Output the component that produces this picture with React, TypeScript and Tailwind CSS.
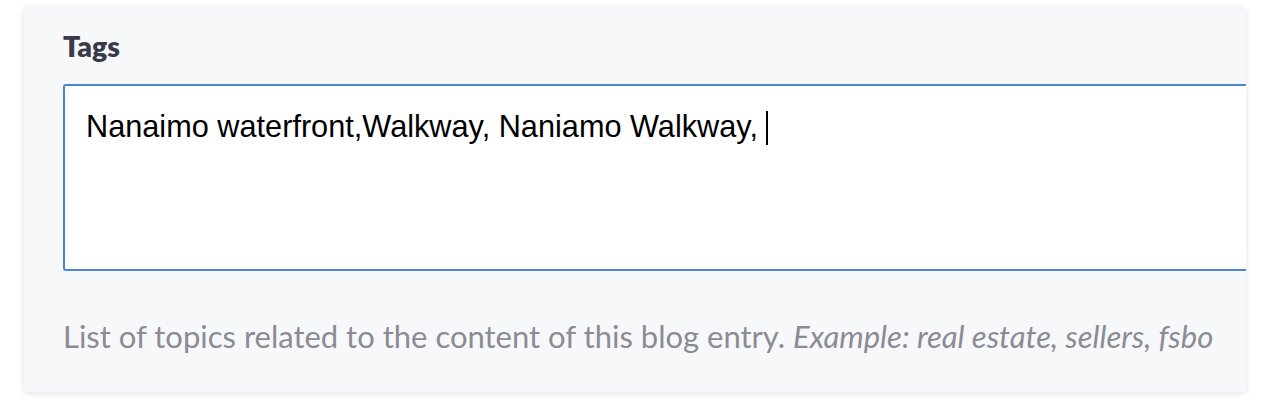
export default function App() {
  return (
    <div className="h-[400px] w-[1270px] overflow-hidden bg-white pl-[24px] pt-[7px]">
      <div className="h-[385px] w-[1222px] overflow-hidden rounded-tr-[6px] bg-[#f7f8fa] pl-[39px] pt-[21px] shadow-[0_1px_6px_rgba(0,0,0,0.12)]">
        <label className="block text-[28.5px] font-extrabold leading-[36px] text-[#3b3a4a] [font-family:Lato,sans-serif]">
          Tags
        </label>
        <div className="mt-[20px] h-[187px] w-[1220px] rounded-[3px] border-2 border-[#4a84d4] bg-white pl-[21px] pt-[17px]">
          <p className="text-[30.7px] leading-[36px] text-black [font-family:'Liberation_Sans',Arial,sans-serif]">
            Nanaimo waterfront,Walkway, Naniamo Walkway,{" "}
            <span className="inline-block h-[34px] w-[2px] translate-y-[8px] bg-black align-baseline" />
          </p>
        </div>
        <p className="mt-[45px] text-[31px] leading-[40px] text-[#8b8b96] [font-family:Lato,sans-serif]">
          List of topics related to the content of this blog entry.{" "}
          <em className="italic">Example: real estate, sellers, fsbo</em>
        </p>
      </div>
    </div>
  );
}
